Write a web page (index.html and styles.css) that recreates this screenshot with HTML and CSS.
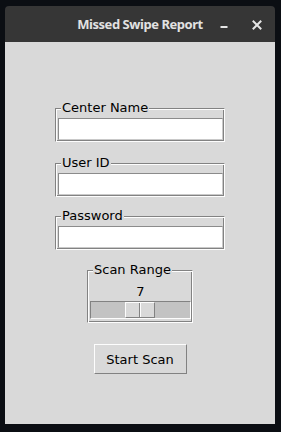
FILE: index.html
```html
<!DOCTYPE html>
<html>
<head>
<meta charset="utf-8">
<link rel="stylesheet" href="styles.css">
</head>
<body>
<div class="window">
  <div class="titlebar">
    <span class="spacer"></span>
    <span class="title">Missed Swipe Report</span>
    <div class="controls">
      <svg class="ctl" width="16" height="16" viewBox="0 0 16 16"><rect x="4.5" y="10" width="7" height="2" fill="#e6e6e6"/></svg>
      <svg class="ctl" width="16" height="16" viewBox="0 0 16 16"><path d="M4.5 5.5 L11.5 12.5 M11.5 5.5 L4.5 12.5" stroke="#e6e6e6" stroke-width="2" stroke-linecap="square" fill="none"/></svg>
    </div>
  </div>
  <div class="content">
    <div class="group field-group first">
      <div class="group-label">Center Name</div>
      <input class="entry" type="text">
    </div>
    <div class="group field-group second">
      <div class="group-label">User ID</div>
      <input class="entry" type="text">
    </div>
    <div class="group field-group third">
      <div class="group-label">Password</div>
      <input class="entry" type="password">
    </div>
    <div class="group scan-group">
      <div class="group-label">Scan Range</div>
      <div class="scale-value">7</div>
      <div class="trough"><div class="slider"></div></div>
    </div>
    <button class="start-btn" type="button">Start Scan</button>
  </div>
</div>
</body>
</html>
```
FILE: styles.css
```css
html, body {
  margin: 0;
  padding: 0;
}
body {
  background: #0b0e13;
  width: 281px;
  height: 432px;
  box-sizing: border-box;
  padding: 6px 6px 8px 5px;
  font-family: "DejaVu Sans", sans-serif;
}
.window {
  width: 270px;
  height: 418px;
  display: flex;
  flex-direction: column;
}
.titlebar {
  height: 36px;
  flex: none;
  background: #363636;
  border-radius: 4px 4px 0 0;
  display: grid;
  grid-template-columns: 1fr auto 1fr;
  align-items: center;
}
.title {
  font-family: "Noto Sans", sans-serif;
  font-weight: 700;
  font-size: 13px;
  letter-spacing: -0.45px;
  color: #e2e2e2;
  white-space: nowrap;
}
.controls {
  justify-self: end;
  display: flex;
  align-items: center;
  gap: 17px;
  padding-right: 10px;
}
.ctl {
  display: block;
}
.content {
  flex: 1;
  background: #d9d9d9;
  display: flex;
  flex-direction: column;
  align-items: center;
}
.group {
  box-sizing: border-box;
  border: 1px solid;
  border-color: #828282 #fdfdfd #fdfdfd #828282;
  box-shadow: inset 1px 1px 0 #fdfdfd, inset -1px -1px 0 #828282;
  padding: 0 1px 1px 2px;
  display: flex;
  flex-direction: column;
}
.field-group {
  width: 170px;
}
.first { margin-top: 66px; }
.second { margin-top: 21px; }
.third { margin-top: 19px; }
.group-label {
  align-self: flex-start;
  margin: -9px 0 0 3px;
  padding: 0 1px;
  background: #d9d9d9;
  font-size: 13px;
  line-height: 15px;
  color: #000;
}
.entry {
  display: block;
  box-sizing: border-box;
  width: 165px;
  height: 22px;
  margin: 3px 0 0 0;
  padding: 0;
  border: 1px solid;
  border-color: #8b8b8b #c9c9c9 #c9c9c9 #8b8b8b;
  background: #fff;
  outline: none;
}
.scan-group {
  width: 106px;
  margin-top: 20px;
  padding-bottom: 3px;
}
.scale-value {
  margin-top: 7px;
  text-align: center;
  font-size: 13px;
  line-height: 15px;
  color: #000;
}
.trough {
  margin-top: 2px;
  box-sizing: border-box;
  width: 101px;
  height: 18px;
  border: 1px solid;
  border-color: #828282 #fdfdfd #fdfdfd #828282;
  background: #c3c3c3;
  display: flex;
}
.slider {
  box-sizing: border-box;
  margin-left: 34px;
  width: 30px;
  height: 16px;
  border: 1px solid;
  border-color: #fdfdfd #828282 #828282 #fdfdfd;
  background: linear-gradient(to right, #d9d9d9 13px, #828282 13px 14px, #fdfdfd 14px 15px, #d9d9d9 15px);
}
.start-btn {
  margin-top: 21px;
  box-sizing: border-box;
  width: 93px;
  height: 30px;
  padding: 0;
  border: 1px solid;
  border-color: #fdfdfd #828282 #828282 #fdfdfd;
  background: #d9d9d9;
  font-family: "DejaVu Sans", sans-serif;
  font-size: 13px;
  color: #000;
}
```
